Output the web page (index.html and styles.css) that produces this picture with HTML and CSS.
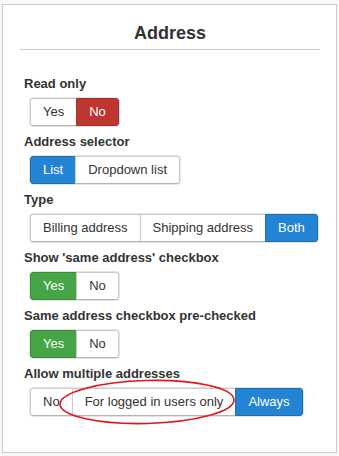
FILE: index.html
```html
<!DOCTYPE html>
<html lang="en">
<head>
    <meta charset="UTF-8">
    <title>Address</title>
    <link rel="stylesheet" href="styles.css">
</head>
<body>
    <div class="panel">
        <h2 class="panel-title">Address</h2>
        <div class="form">
            <div class="field">
                <div class="label">Read only</div>
                <div class="btn-group">
                    <span class="btn">Yes</span>
                    <span class="btn btn-danger">No</span>
                </div>
            </div>
            <div class="field">
                <div class="label">Address selector</div>
                <div class="btn-group">
                    <span class="btn btn-primary">List</span>
                    <span class="btn">Dropdown list</span>
                </div>
            </div>
            <div class="field">
                <div class="label">Type</div>
                <div class="btn-group">
                    <span class="btn">Billing address</span>
                    <span class="btn">Shipping address</span>
                    <span class="btn btn-primary">Both</span>
                </div>
            </div>
            <div class="field">
                <div class="label">Show 'same address' checkbox</div>
                <div class="btn-group">
                    <span class="btn btn-success">Yes</span>
                    <span class="btn">No</span>
                </div>
            </div>
            <div class="field">
                <div class="label">Same address checkbox pre-checked</div>
                <div class="btn-group">
                    <span class="btn btn-success">Yes</span>
                    <span class="btn">No</span>
                </div>
            </div>
            <div class="field">
                <div class="label">Allow multiple addresses</div>
                <div class="marked">
                    <div class="btn-group">
                        <span class="btn">No</span>
                        <span class="btn">For logged in users only</span>
                        <span class="btn btn-primary">Always</span>
                    </div>
                    <!-- hand-drawn highlight -->
                    <svg class="circle" width="180" height="48" viewBox="0 0 180 48">
                        <ellipse cx="90" cy="24" rx="87" ry="21.5" fill="none" stroke="#e4141b" stroke-width="1.6" transform="rotate(-1.5 90 24)"/>
                    </svg>
                </div>
            </div>
        </div>
    </div>
</body>
</html>
```

FILE: styles.css
```css
body {
    font-family: "Liberation Sans", Arial, Helvetica, sans-serif;
    font-size: 13px;
    color: #333333;
    margin: 4px 2px 0 2px;
    padding: 0;
    background-color: #f8f8f8;
}
.panel {
    width: 335px;
    height: 449px;
    background-color: #ffffff;
    border: 1px solid #cccccc;
    padding: 0 16px 0 17px;
    box-sizing: border-box;
}
.panel-title {
    margin: 18px 0 0 0;
    padding-bottom: 6px;
    border-bottom: 1px solid #cccccc;
    font-size: 18px;
    line-height: 20px;
    text-align: center;
}
.form {
    padding: 25px 0 0 4px;
}
.field {
    margin-bottom: 6px;
}
.label {
    font-weight: bold;
    line-height: 18px;
    margin-bottom: 4px;
}
.btn-group {
    display: inline-flex;
    margin-left: 5px;
    border: 1px solid #e4e4e4;
    border-radius: 4px;
}
.btn {
    display: block;
    flex: none;
    white-space: nowrap;
    padding: 4px 12px;
    line-height: 18px;
    background-color: #ffffff;
    color: #333333;
    border: 1px solid #cccccc;
    border-bottom-color: #b3b3b3;
    margin-left: -1px;
}
.btn:first-child {
    margin-left: 0;
    border-radius: 3px 0 0 3px;
}
.btn:last-child {
    border-radius: 0 3px 3px 0;
}
.btn-danger {
    background-color: #bd362f;
    border-color: #a7302a;
    color: #ffffff;
}
.btn-primary {
    background-color: #2384d3;
    border-color: #1d6fb2;
    color: #ffffff;
}
.btn-success {
    background-color: #46a546;
    border-color: #3b8c3b;
    color: #ffffff;
}
.marked {
    position: relative;
}
.circle {
    position: absolute;
    left: 33px;
    top: -9px;
}
```
